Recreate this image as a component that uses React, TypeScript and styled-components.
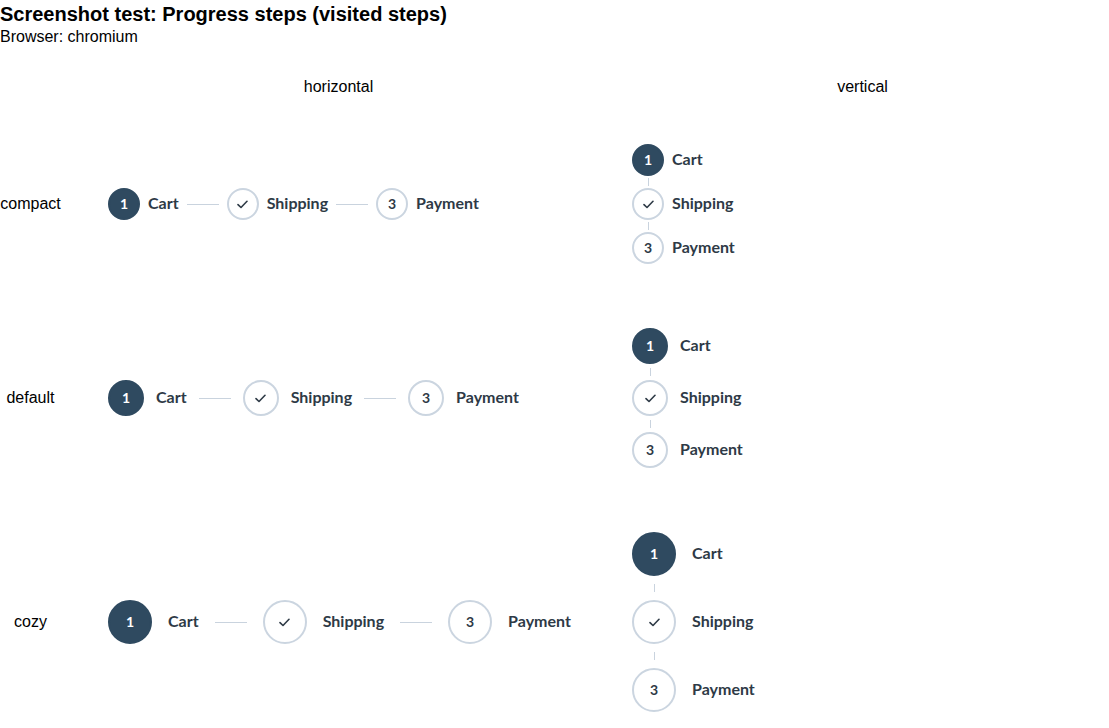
import React from "react";
import styled, { createGlobalStyle } from "styled-components";

const Global = createGlobalStyle`
  html, body { margin: 0; padding: 0; background: #ffffff; }
  body { font-family: "Liberation Sans", Arial, sans-serif; color: #000; }
`;

type Size = "compact" | "default" | "cozy";
const SIZES: Record<Size, { d: number; gap: number; vgap: number }> = {
  compact: { d: 32, gap: 8, vgap: 12 },
  default: { d: 36, gap: 12, vgap: 16 },
  cozy: { d: 44, gap: 16, vgap: 24 },
};

const Title = styled.h1`
  margin: 0;
  font-size: 20px;
  line-height: 28px;
  font-weight: 700;
`;

const Sub = styled.div`
  font-size: 16px;
  line-height: 18px;
`;

const Table = styled.div`
  display: grid;
  grid-template-columns: 61px 555px 493px;
  align-items: center;
  margin-top: 32px;
`;

const HeadCell = styled.div`
  font-size: 16px;
  line-height: 18px;
  text-align: center;
`;

const LabelCell = styled.div<{ $mt: number }>`
  margin-top: ${(p) => p.$mt}px;
  font-size: 16px;
  line-height: 18px;
  text-align: center;
  white-space: nowrap;
`;

const Cell = styled.div<{ $pl: number; $mt: number }>`
  padding-left: ${(p) => p.$pl}px;
  margin-top: ${(p) => p.$mt}px;
  display: flex;
`;

const HList = styled.div<{ $gap: number }>`
  display: flex;
  align-items: center;
  gap: ${(p) => p.$gap}px;
`;

const VList = styled.div`
  display: flex;
  flex-direction: column;
`;

const Step = styled.div<{ $gap: number }>`
  display: flex;
  align-items: center;
  gap: ${(p) => p.$gap}px;
`;

const Circle = styled.div<{ $d: number; $active?: boolean }>`
  width: ${(p) => p.$d}px;
  height: ${(p) => p.$d}px;
  box-sizing: border-box;
  border-radius: 50%;
  flex: none;
  display: flex;
  align-items: center;
  justify-content: center;
  background: ${(p) => (p.$active ? "#2f4a60" : "#ffffff")};
  border: 2px solid ${(p) => (p.$active ? "#2f4a60" : "#cbd5e0")};
  color: ${(p) => (p.$active ? "#ffffff" : "#2e3a46")};
  font-family: "Lato", "Open Sans", sans-serif;
  font-weight: 700;
  font-size: 14px;
  line-height: 1;
`;

const StepLabel = styled.span`
  font-family: "Lato", "Open Sans", sans-serif;
  font-weight: 700;
  font-size: 16px;
  line-height: 18px;
  color: #2e3a46;
  white-space: nowrap;
  position: relative;
  top: -1px;
`;

const HLine = styled.div`
  width: 32px;
  height: 1px;
  background: #c9d3de;
  flex: none;
`;

const VConnector = styled.div<{ $d: number; $h: number }>`
  width: ${(p) => p.$d}px;
  height: ${(p) => p.$h}px;
  display: flex;
  align-items: center;
  justify-content: center;
`;

const VLine = styled.div`
  width: 1px;
  height: 8px;
  background: #c9d3de;
`;

const Check = () => (
  <svg width="11" height="9" viewBox="0 0 11 9" fill="none">
    <path d="M1 4.6 L4 7.5 L10 1.3" stroke="#2e3a46" strokeWidth="1.6" strokeLinecap="round" strokeLinejoin="round" />
  </svg>
);

const steps = [
  { key: "cart", label: "Cart", mark: "1", active: true },
  { key: "ship", label: "Shipping", mark: "check", active: false },
  { key: "pay", label: "Payment", mark: "3", active: false },
];

const Marker = ({ d, s }: { d: number; s: (typeof steps)[number] }) => (
  <Circle $d={d} $active={s.active}>
    {s.mark === "check" ? <Check /> : s.mark}
  </Circle>
);

const Horizontal = ({ size }: { size: Size }) => {
  const { d, gap } = SIZES[size];
  return (
    <HList $gap={gap}>
      {steps.map((s, i) => (
        <React.Fragment key={s.key}>
          {i > 0 && <HLine />}
          <Step $gap={gap}>
            <Marker d={d} s={s} />
            <StepLabel>{s.label}</StepLabel>
          </Step>
        </React.Fragment>
      ))}
    </HList>
  );
};

const Vertical = ({ size }: { size: Size }) => {
  const { d, gap, vgap } = SIZES[size];
  return (
    <VList>
      {steps.map((s, i) => (
        <React.Fragment key={s.key}>
          {i > 0 && (
            <VConnector $d={d} $h={vgap}>
              <VLine />
            </VConnector>
          )}
          <Step $gap={gap}>
            <Marker d={d} s={s} />
            <StepLabel>{s.label}</StepLabel>
          </Step>
        </React.Fragment>
      ))}
    </VList>
  );
};

const rows: { size: Size; mt: number }[] = [
  { size: "compact", mt: 48 },
  { size: "default", mt: 64 },
  { size: "cozy", mt: 64 },
];

export default function App() {
  return (
    <>
      <Global />
      <Title>Screenshot test: Progress steps (visited steps)</Title>
      <Sub>Browser: chromium</Sub>
      <Table>
        <HeadCell />
        <HeadCell>horizontal</HeadCell>
        <HeadCell>vertical</HeadCell>
        {rows.map((r) => (
          <React.Fragment key={r.size}>
            <LabelCell $mt={r.mt}>{r.size}</LabelCell>
            <Cell $pl={47} $mt={r.mt}>
              <Horizontal size={r.size} />
            </Cell>
            <Cell $pl={16} $mt={r.mt}>
              <Vertical size={r.size} />
            </Cell>
          </React.Fragment>
        ))}
      </Table>
    </>
  );
}
